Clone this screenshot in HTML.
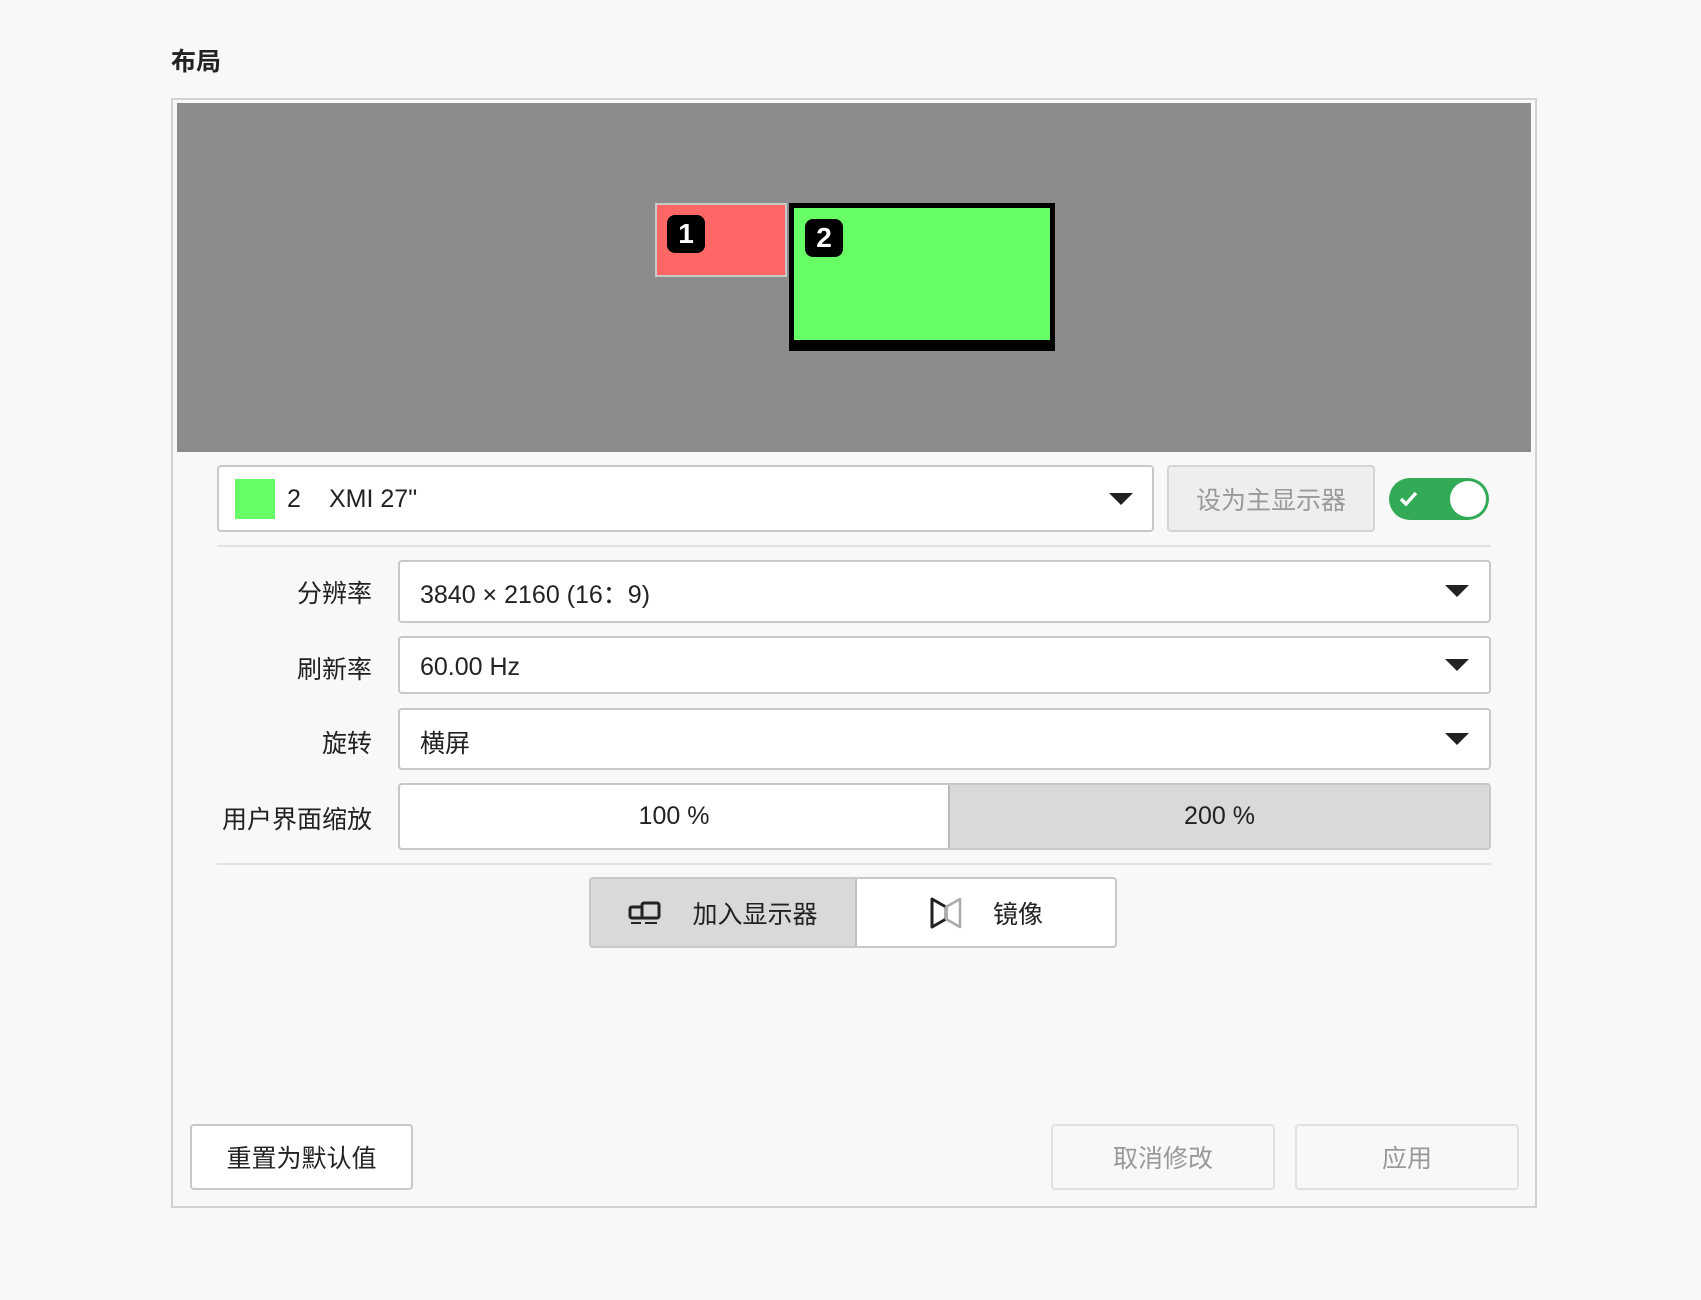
<!DOCTYPE html><html><head><meta charset="utf-8"><style>
body{margin:0;width:1701px;height:1300px;background:#f8f8f8;font-family:"Liberation Sans","Noto Sans CJK SC",sans-serif;color:#222;position:relative;overflow:hidden}
.a{position:absolute;box-sizing:border-box}
.t{font-size:25px}
.cb{background:#fff;border:2px solid #c8c8cc;border-radius:4px}
.arr{position:absolute;width:0;height:0;border-left:12px solid transparent;border-right:12px solid transparent;border-top:12px solid #222}
.lab{position:absolute;right:1329px;font-size:25px;text-align:right;white-space:nowrap}
.badge{position:absolute;width:38px;height:38px;background:#000;border-radius:8px;color:#fff;font-weight:bold;font-size:28px;text-align:center;line-height:38px}
.btn{border:2px solid #d0d0d0;border-radius:4px;display:flex;align-items:center;justify-content:center;font-size:25px}
</style></head><body>
<div class="a" style="left:171px;top:42px;font-size:25px;font-weight:bold">布局</div>
<div class="a" style="left:171px;top:98px;width:1366px;height:1110px;border:2px solid #d2d2d2;background:#f8f8f8"></div>
<div class="a" style="left:177px;top:103px;width:1354px;height:349px;background:#8c8c8c"></div>
<div class="a" style="left:655px;top:203px;width:132px;height:74px;background:#ff6666;border:2px solid #c8c8c8"></div>
<div class="badge" style="left:667px;top:215px">1</div>
<div class="a" style="left:789px;top:203px;width:266px;height:148px;background:#000"></div>
<div class="a" style="left:794px;top:208px;width:256px;height:132px;background:#66ff66"></div>
<div class="badge" style="left:805px;top:219px">2</div>

<div class="a cb" style="left:217px;top:465px;width:937px;height:67px"></div>
<div class="a" style="left:235px;top:479px;width:40px;height:40px;background:#66ff66"></div>
<div class="a t" style="left:287px;top:485px">2</div>
<div class="a t" style="left:329px;top:485px">XMI 27"</div>
<div class="arr" style="left:1109px;top:493px"></div>
<div class="a btn" style="left:1167px;top:465px;width:208px;height:67px;background:#eeeeee;color:#999;border-color:#d4d4d4">设为主显示器</div>
<div class="a" style="left:1389px;top:478px;width:100px;height:42px;background:#33aa55;border-radius:21px"></div>
<div class="a" style="left:1450px;top:481px;width:36px;height:36px;background:#fff;border-radius:50%"></div>
<svg class="a" style="left:1398px;top:489px" width="22" height="20"><path d="M3 10l5 5 10-11" stroke="#fff" stroke-width="3.5" fill="none"/></svg>
<div class="a" style="left:217px;top:545px;width:1274px;height:2px;background:#e2e2e2"></div>

<div class="lab" style="top:574px">分辨率</div>
<div class="a cb" style="left:398px;top:560px;width:1093px;height:63px"></div>
<div class="a t" style="left:420px;top:575px">3840 × 2160 (16：9)</div>
<div class="arr" style="left:1445px;top:585px"></div>

<div class="lab" style="top:650px">刷新率</div>
<div class="a cb" style="left:398px;top:636px;width:1093px;height:58px"></div>
<div class="a t" style="left:420px;top:653px">60.00 Hz</div>
<div class="arr" style="left:1445px;top:659px"></div>

<div class="lab" style="top:724px">旋转</div>
<div class="a cb" style="left:398px;top:708px;width:1093px;height:62px"></div>
<div class="a t" style="left:420px;top:724px">横屏</div>
<div class="arr" style="left:1445px;top:733px"></div>

<div class="lab" style="top:800px">用户界面缩放</div>
<div class="a cb" style="left:398px;top:783px;width:1093px;height:67px;overflow:hidden;padding:0;display:flex">
<div style="width:548px;display:flex;align-items:center;justify-content:center;font-size:25px">100 %</div>
<div style="flex:1;background:#d9d9d9;border-left:2px solid #b8b8b8;display:flex;align-items:center;justify-content:center;font-size:25px">200 %</div></div>
<div class="a" style="left:217px;top:863px;width:1274px;height:2px;background:#e2e2e2"></div>

<div class="a cb" style="left:589px;top:877px;width:528px;height:71px;overflow:hidden;display:flex">
<div style="width:264px;background:#d9d9d9;border-right:2px solid #c0c0c0;display:flex;align-items:center;justify-content:center;font-size:25px">
<svg width="34" height="26" style="margin-right:30px"><rect x="2" y="7" width="14" height="11" rx="2" fill="none" stroke="#222" stroke-width="3"/><rect x="14" y="3" width="17" height="15" rx="2" fill="#d9d9d9" stroke="#222" stroke-width="3"/><path d="M3 23h10M17 23h12" stroke="#222" stroke-width="2"/></svg>加入显示器</div>
<div style="flex:1;display:flex;align-items:center;justify-content:center;font-size:25px">
<svg width="34" height="34" style="margin-right:30px"><path d="M3 3L17 11v12L3 31z" fill="none" stroke="#222" stroke-width="3" stroke-linejoin="round"/><path d="M31 3L17 11v12l14 8z" fill="none" stroke="#aaa" stroke-width="2.5" stroke-linejoin="round"/></svg>镜像</div></div>

<div class="a btn" style="left:190px;top:1124px;width:223px;height:66px;background:#fff;border-color:#c8c8cc">重置为默认值</div>
<div class="a btn" style="left:1051px;top:1124px;width:224px;height:66px;background:#f8f8f8;color:#999;border-color:#e0e0e0">取消修改</div>
<div class="a btn" style="left:1295px;top:1124px;width:224px;height:66px;background:#f8f8f8;color:#999;border-color:#e0e0e0">应用</div>
</body></html>
